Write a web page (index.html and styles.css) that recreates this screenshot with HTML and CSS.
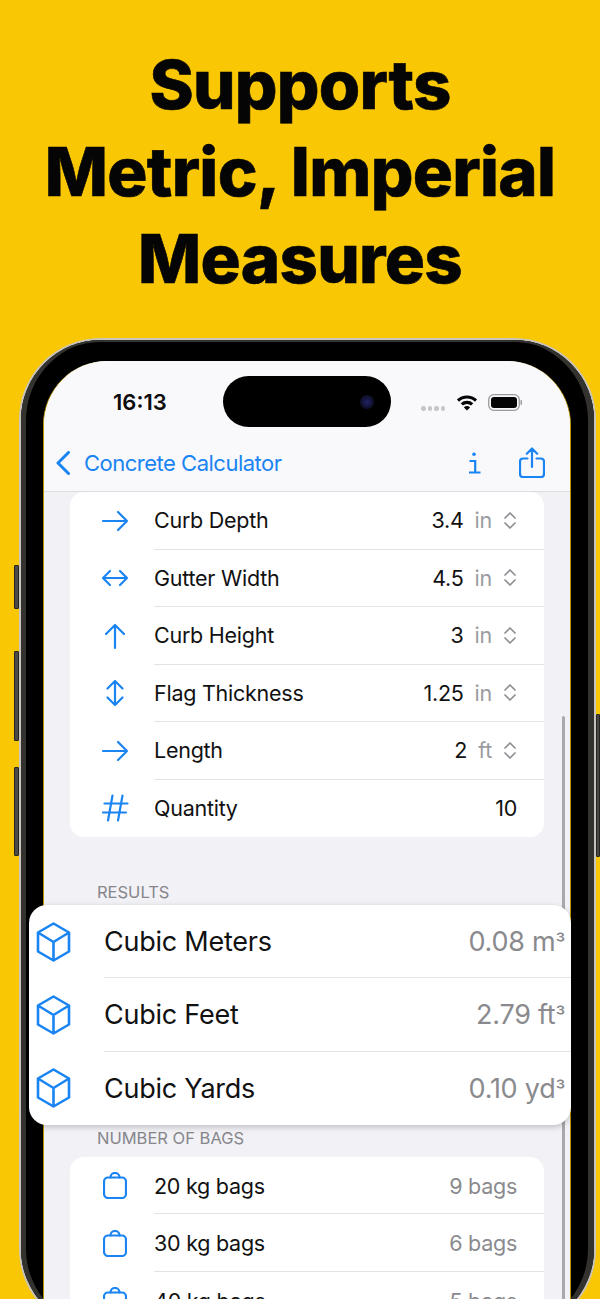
FILE: index.html
```html
<!DOCTYPE html>
<html lang="en">
<head>
  <meta charset="UTF-8">
  <title>Concrete Calculator</title>
  <link rel="stylesheet" href="styles.css">
</head>
<body>

<svg class="defs" width="0" height="0">
  <symbol id="cube" viewBox="0 0 35 40"><path d="M17.5 1.5 33 10.5V29.5L17.5 38.5 2 29.5V10.5ZM2 10.5 17.5 20 33 10.5M17.5 20V38.5"/></symbol>
  <symbol id="bag" viewBox="0 0 24 27"><rect x="1" y="5.5" width="22" height="20.5" rx="4"/><path d="M7.5 5.5a4.5 4.5 0 0 1 9 0"/></symbol>
  <symbol id="updown" viewBox="0 0 14 19"><path d="M2 7 7 2 12 7M2 12 7 17 12 12"/></symbol>
  <symbol id="right" viewBox="0 0 28 22"><path d="M2 11H26M17 2 26 11 17 20"/></symbol>
</svg>

<h1 class="headline">Supports<br>Metric, Imperial<br>Measures</h1>

<div class="phone">
  <span class="side-btn btn-mute"></span>
  <span class="side-btn btn-up"></span>
  <span class="side-btn btn-down"></span>
  <span class="side-btn btn-power"></span>
  <div class="rim">
    <div class="bezel">
      <div class="screen">
        <span class="scrollbar"></span>

        <header class="top">
          <div class="status">
            <div class="time">16:13</div>
            <div class="island"><span class="camera"></span></div>
            <div class="status-icons">
              <span class="signal"><i></i><i></i><i></i><i></i></span>
              <svg class="wifi" width="22" height="17" viewBox="0 0 22 17"><path d="M2 6.6A13 13 0 0 1 20 6.6M5.8 10.4A7.6 7.6 0 0 1 16.2 10.4"/><path class="wifi-dot" d="M11 16.6 7.9 13.4A4.4 4.4 0 0 1 14.1 13.4Z"/></svg>
              <svg class="battery" width="35" height="17" viewBox="0 0 35 17"><rect x="0.7" y="0.7" width="30.6" height="15.6" rx="5" class="batt-edge"/><rect x="3" y="3" width="26" height="11" rx="3"/><rect x="32.5" y="6" width="1.5" height="5" rx="0.7" class="batt-tip"/></svg>
            </div>
          </div>
          <nav class="navbar">
            <svg class="nav-back" width="16" height="24" viewBox="0 0 16 24"><path d="M13.5 1.5 3 12 13.5 22.5"/></svg>
            <span class="nav-title">Concrete Calculator</span>
            <svg class="nav-info" width="13" height="22" viewBox="0 0 13 22"><circle cx="6" cy="2.2" r="1.8"/><path d="M1.5 9H7.2V20.5M1 20.5H12.5"/></svg>
            <svg class="nav-share" width="26" height="31" viewBox="0 0 26 31"><path d="M8.5 11.5H4A3 3 0 0 0 1 14.5V27A3 3 0 0 0 4 30H22A3 3 0 0 0 25 27V14.5A3 3 0 0 0 22 11.5H17.5M13 20V2M7.8 6.7 13 1.5 18.2 6.7"/></svg>
          </nav>
        </header>

        <section class="card">
          <div class="row">
            <span class="row-icon"><svg width="28" height="22"><use href="#right"/></svg></span>
            <div class="row-body"><span class="label">Curb Depth</span><span class="val">3.4</span><span class="unit">in</span><svg class="stepper" width="14" height="19"><use href="#updown"/></svg></div>
          </div>
          <div class="row">
            <span class="row-icon"><svg width="28" height="18" viewBox="0 0 28 18"><path d="M2 9H26M9 2 2 9 9 16M19 2 26 9 19 16"/></svg></span>
            <div class="row-body"><span class="label">Gutter Width</span><span class="val">4.5</span><span class="unit">in</span><svg class="stepper" width="14" height="19"><use href="#updown"/></svg></div>
          </div>
          <div class="row">
            <span class="row-icon"><svg width="22" height="26" viewBox="0 0 22 26"><path d="M11 2V25M2 11 11 2 20 11"/></svg></span>
            <div class="row-body"><span class="label">Curb Height</span><span class="val">3</span><span class="unit">in</span><svg class="stepper" width="14" height="19"><use href="#updown"/></svg></div>
          </div>
          <div class="row">
            <span class="row-icon"><svg width="20" height="28" viewBox="0 0 20 28"><path d="M10 2V26M2.500 9.500 10 2 17.500 9.500M2.500 18.500 10 26 17.500 18.500"/></svg></span>
            <div class="row-body"><span class="label">Flag Thickness</span><span class="val">1.25</span><span class="unit">in</span><svg class="stepper" width="14" height="19"><use href="#updown"/></svg></div>
          </div>
          <div class="row">
            <span class="row-icon"><svg width="28" height="22"><use href="#right"/></svg></span>
            <div class="row-body"><span class="label">Length</span><span class="val">2</span><span class="unit">ft</span><svg class="stepper" width="14" height="19"><use href="#updown"/></svg></div>
          </div>
          <div class="row">
            <span class="row-icon"><svg width="26" height="28" viewBox="0 0 26 28"><path d="M10.500 1.500 6 26.500M20.500 1.500 16 26.500M2.500 9.500H25.500M1 18.500H24"/></svg></span>
            <div class="row-body"><span class="label">Quantity</span><span class="val">10</span></div>
          </div>
        </section>

        <div class="section-title results-title">Results</div>

        <section class="card card-float">
          <div class="row">
            <span class="row-icon"><svg width="35" height="40"><use href="#cube"/></svg></span>
            <div class="row-body"><span class="label">Cubic Meters</span><span class="result">0.08 m<span class="cube-mark">³</span></span></div>
          </div>
          <div class="row">
            <span class="row-icon"><svg width="35" height="40"><use href="#cube"/></svg></span>
            <div class="row-body"><span class="label">Cubic Feet</span><span class="result">2.79 ft<span class="cube-mark">³</span></span></div>
          </div>
          <div class="row">
            <span class="row-icon"><svg width="35" height="40"><use href="#cube"/></svg></span>
            <div class="row-body"><span class="label">Cubic Yards</span><span class="result">0.10 yd<span class="cube-mark">³</span></span></div>
          </div>
        </section>

        <div class="section-title bags-title">Number of bags</div>

        <section class="card card-bags">
          <div class="row">
            <span class="row-icon"><svg width="24" height="27"><use href="#bag"/></svg></span>
            <div class="row-body"><span class="label">20 kg bags</span><span class="result">9 bags</span></div>
          </div>
          <div class="row">
            <span class="row-icon"><svg width="24" height="27"><use href="#bag"/></svg></span>
            <div class="row-body"><span class="label">30 kg bags</span><span class="result">6 bags</span></div>
          </div>
          <div class="row">
            <span class="row-icon"><svg width="24" height="27"><use href="#bag"/></svg></span>
            <div class="row-body"><span class="label">40 kg bags</span><span class="result">5 bags</span></div>
          </div>
        </section>
      </div>
    </div>
  </div>
</div>

</body>
</html>
```

FILE: styles.css
```css
html, body { margin: 0; height: 1299px; overflow: hidden; }
body { background: #fac705; font-family: Inter, "Liberation Sans", sans-serif; color: #111; }
.defs { position: absolute; }

.headline { margin: 0; padding-top: 41px; font-size: 67px; font-weight: 800; line-height: 87px; text-align: center; color: #050505; letter-spacing: -0.7px; -webkit-text-stroke: 0.6px #050505; }

/* phone frame */
.phone { position: relative; width: 577px; margin: 36px 0 0 19px; }
.rim { padding: 2px; border-radius: 82px; background: #c9c5bc; }
.bezel { padding: 3px 23px 0 22px; border-radius: 80px; background: #000; box-shadow: inset 5px 0 0 #33322f, inset -6px 0 0 #33322f, inset 0 2px 0 #33322f; }
.screen { position: relative; margin-top: 18px; border-radius: 64px 64px 0 0; border-left: 1px solid #b89400; border-right: 1px solid #b89400; background: #f1f1f6; }
.side-btn { position: absolute; width: 5px; background: #4b4a46; border: 1px solid #262521; box-sizing: border-box; border-radius: 1px; }
.btn-mute { left: -5px; top: 227px; height: 44px; }
.btn-up { left: -5px; top: 313px; height: 90px; }
.btn-down { left: -5px; top: 429px; height: 89px; }
.btn-power { right: -4px; top: 376px; width: 4px; height: 143px; }

.scrollbar { position: absolute; top: 355px; bottom: 0; right: 5px; width: 3px; background: #a9a9ad; border-radius: 2px; }

/* top bars */
.top { background: #f9f9fc; border-radius: 64px 64px 0 0; border-bottom: 1px solid #dcdce0; }
.status { display: grid; grid-template-columns: 1fr 168px 1fr; height: 51px; padding-top: 15px; }
.time { padding: 10px 0 0 69px; font-size: 22px; font-weight: 600; line-height: 32px; color: #0c0c0c; }
.island { display: flex; align-items: center; justify-content: flex-end; padding-right: 17px; border-radius: 26px; background: #000; box-sizing: border-box; }
.camera { width: 14px; height: 14px; border-radius: 50%; background: radial-gradient(circle, #23236a 0, #14143a 45%, #08080f 100%); }
.status-icons { display: flex; align-items: flex-start; padding: 18px 0 0 30px; }
.signal { display: flex; gap: 2px; margin: 12px 11px 0 0; }
.signal i { width: 4.500px; height: 4.500px; border-radius: 50%; background: #c6c6ca; }
.wifi { margin-right: 10px; fill: none; stroke: #050505; stroke-width: 3.200px; }
.wifi-dot { fill: #050505; stroke: none; }
.battery { fill: #050505; }
.batt-edge { fill: none; stroke: #9a9a9c; stroke-width: 1.300px; }
.batt-tip { fill: #9a9a9c; }

.navbar { display: flex; align-items: center; height: 64px; padding: 8px 25px 0 11px; box-sizing: border-box; color: #1a84f2; }
.navbar svg { fill: none; stroke: #1a84f2; }
.nav-back { stroke-width: 3px; stroke-linecap: round; stroke-linejoin: round; }
.nav-title { flex: 1; margin-left: 13px; font-size: 22px; line-height: 30px; letter-spacing: -0.5px; }
.nav-info { margin-right: 38px; stroke-width: 2.200px; }
.nav-info circle { fill: #1a84f2; stroke: none; }
.nav-share { stroke-width: 2.200px; stroke-linecap: round; stroke-linejoin: round; margin-top: -1px; }

/* list cards */
.card { margin: 0 26px; background: #fff; border-radius: 14px; }
.row { display: flex; align-items: center; height: 57.500px; padding-left: 19px; }
.row-icon { display: flex; align-items: center; justify-content: center; width: 52px; margin-right: 13px; flex: none; }
.row-icon svg { fill: none; stroke: #1a84f2; stroke-width: 2.200px; stroke-linecap: round; stroke-linejoin: round; overflow: visible; }
.row-body { flex: 1; display: flex; align-items: center; align-self: stretch; gap: 11px; padding-right: 27px; border-bottom: 1px solid #e3e3e6; font-size: 21.500px; letter-spacing: -0.25px; }
.row:last-child .row-body { border-bottom: 0; }
.label { flex: 1; }
.unit { color: #9b9b9f; }
.stepper { fill: none; stroke: #8e8e93; stroke-width: 1.700px; stroke-linecap: round; stroke-linejoin: round; }
.result { color: #8a8a8e; }
.cube-mark { font-size: 22px; }

.section-title { padding-left: 53px; font-size: 16.500px; line-height: 20px; text-transform: uppercase; color: #86868b; }
.results-title { padding-top: 45px; padding-bottom: 3px; }
.bags-title { padding-top: 3px; padding-bottom: 9px; }

/* the results card sits enlarged over the bezel */
.card-float { position: relative; margin: 0 -1px 0 -15px; border-radius: 18px; box-shadow: 0 2px 6px rgba(0, 0, 0, 0.22); }
.card-float .row { height: 73.300px; padding-left: 0; }
.card-float .row-icon { width: 49px; margin-right: 26px; }
.card-float .row-icon svg { stroke-width: 2.600px; }
.card-float .row-body { padding: 1px 6px 0 0; font-size: 27px; letter-spacing: -0.25px; }
.card-bags .row-body { padding-top: 1px; }
```
